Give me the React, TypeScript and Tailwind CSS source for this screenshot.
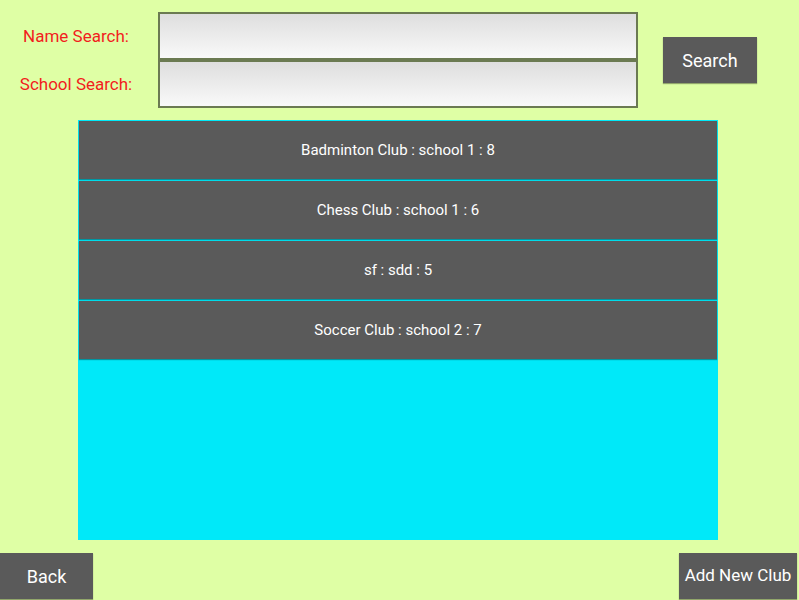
// App.tsx – club search screen

import React from "react";

const clubs = [
  "Badminton Club : school 1 : 8",
  "Chess Club : school 1 : 6",
  "sf : sdd : 5",
  "Soccer Club : school 2 : 7",
];

export default function App() {
  return (
    <div className="flex h-[600px] w-[799px] flex-col bg-[#dfffa5] font-['Roboto',sans-serif]">
      {/* search fields */}
      <div className="flex pt-3">
        <div className="flex w-[158px] flex-col pr-[6px] text-[17px] text-[#f21d1d]">
          <div className="flex h-12 items-center justify-center pt-[1px]">Name Search:</div>
          <div className="flex h-12 items-center justify-center pt-[1px]">School Search:</div>
        </div>
        <div className="flex w-[480px] flex-col">
          <input className="h-12 w-full border-2 border-[#6b7a52] bg-gradient-to-b from-[#dedede] to-[#f9f9f9] outline-none" />
          <input className="h-12 w-full border-2 border-[#6b7a52] bg-gradient-to-b from-[#dedede] to-[#f9f9f9] outline-none" />
        </div>
        <div className="ml-[25px] flex items-center">
          <button className="h-[46px] w-[94px] bg-[#5a5a5a] text-[18px] text-white shadow-[0_1px_1px_rgba(0,0,0,0.35)]">
            Search
          </button>
        </div>
      </div>

      {/* club list */}
      <div className="ml-[78px] mt-3 h-[420px] w-[640px] bg-[#00e9f9]">
        {clubs.map((club) => (
          <div key={club} className="h-[60px] p-px">
            <div className="flex h-full items-center justify-center bg-[#5a5a5a] text-[15px] text-white shadow-[0_1px_1px_rgba(0,0,0,0.35)]">
              {club}
            </div>
          </div>
        ))}
      </div>

      {/* bottom buttons */}
      <div className="mt-[13px] flex justify-between pr-[2px]">
        <button className="h-[46px] w-[93px] bg-[#5a5a5a] text-[18px] text-white shadow-[0_1px_1px_rgba(0,0,0,0.35)]">
          Back
        </button>
        <button className="h-[46px] w-[118px] bg-[#5a5a5a] text-[17px] text-white shadow-[0_1px_1px_rgba(0,0,0,0.35)]">
          Add New Club
        </button>
      </div>
    </div>
  );
}
